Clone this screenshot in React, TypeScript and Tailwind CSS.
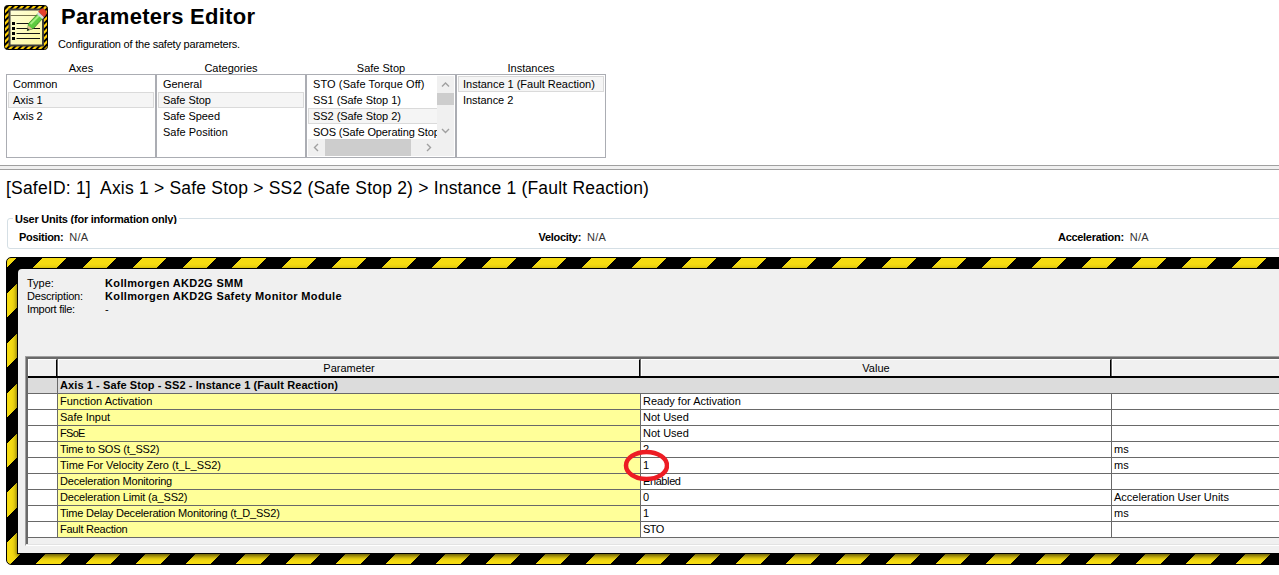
import React from "react";

type Row = { name: string; nameTrack?: string; value: string; valueTrack?: string; unit: string };

const rows: Row[] = [
  { name: "Function Activation", value: "Ready for Activation", unit: "" },
  { name: "Safe Input", value: "Not Used", unit: "" },
  { name: "FSoE", nameTrack: "tracking-[-0.7px]", value: "Not Used", unit: "" },
  { name: "Time to SOS (t_SS2)", nameTrack: "tracking-[-0.2px]", value: "2", unit: "ms" },
  { name: "Time For Velocity Zero (t_L_SS2)", nameTrack: "tracking-[-0.06px]", value: "1", unit: "ms" },
  { name: "Deceleration Monitoring", nameTrack: "tracking-[-0.18px]", value: "Enabled", valueTrack: "tracking-[-0.4px]", unit: "" },
  { name: "Deceleration Limit (a_SS2)", nameTrack: "tracking-[-0.16px]", value: "0", unit: "Acceleration User Units" },
  { name: "Time Delay Deceleration Monitoring (t_D_SS2)", nameTrack: "tracking-[-0.21px]", value: "1", unit: "ms" },
  { name: "Fault Reaction", nameTrack: "tracking-[-0.25px]", value: "STO", valueTrack: "tracking-[-0.5px]", unit: "" },
];

function EditorIcon() {
  return (
    <svg width="44" height="45" viewBox="0 0 44 45" className="block shrink-0">
      <defs>
        <pattern id="iconHazard" width="6" height="6" patternUnits="userSpaceOnUse">
          <rect width="6" height="6" fill="#000" />
          <path d="M0 0H3.2L0 3.2ZM6 0V3.2L3.2 6H0Z" fill="#ffd006" />
        </pattern>
        <linearGradient id="paper" x1="0" y1="0" x2="1" y2="1">
          <stop offset="0" stopColor="#ffffd8" />
          <stop offset="1" stopColor="#fbf7a0" />
        </linearGradient>
      </defs>
      <rect x="0.5" y="0.5" width="43" height="44" rx="3" fill="url(#iconHazard)" stroke="#000" strokeWidth="1" />
      <rect x="5.5" y="4.5" width="33.5" height="36" fill="url(#paper)" stroke="#3c3c3c" strokeWidth="2" />
      <path d="M6.5 10.5H38" stroke="#77744f" strokeWidth="1" />
      <path d="M8 17h3v3H8zM8 22h3v3H8zM8 27h3v3H8zM8 32h3v3H8z" fill="#000" />
      <path d="M12.5 18.5H34M12.5 23.5H36M12.5 28.5H36M12.5 33.5H36" stroke="#151515" strokeWidth="1.2" />
      <path d="M23.5 25.5L24.5 18.5L34.5 8L39.5 12.5L29.5 23.5Z" fill="#5ccb40" stroke="#2e7a24" strokeWidth="0.7" />
      <path d="M26.5 19L36 9.5" stroke="#a4ee80" strokeWidth="2" />
      <path d="M23.5 25.5L24.3 20.5L28.2 23.8Z" fill="#d9b98a" />
      <path d="M22.8 26L23.6 23.2L25.6 24.8Z" fill="#222" />
      <path d="M32.8 9L35 6.5L40.5 11.5L38.3 14Z" fill="#d8dde0" />
      <path d="M34.5 6.8L36.8 4.2Q39.5 3 41.6 5.5Q43.2 8 41.9 10L40 12Z" fill="#e4412d" stroke="#a52b20" strokeWidth="0.5" />
    </svg>
  );
}

function Item({ text, selected = false, track = "tracking-[-0.05px]" }: { text: string; selected?: boolean; track?: string }) {
  const frame = selected ? "border border-[#dadada] bg-[#f5f5f5] pl-1" : "pt-px pl-[5px]";
  return <div className={`h-4 overflow-hidden whitespace-nowrap leading-[15px] ${frame} ${track}`}>{text}</div>;
}

function ListColumn({ title, children }: { title: string; children: React.ReactNode }) {
  return (
    <div className="w-[150px]">
      <div className="h-3 text-center leading-[13px]">{title}</div>
      <div className="h-[84px] border border-[#abadb3] p-px">{children}</div>
    </div>
  );
}

function Chevron({ d }: { d: string }) {
  return (
    <svg width="9" height="9" viewBox="0 0 9 9" className="block">
      <path d={d} fill="none" stroke="#a0a0a0" strokeWidth="1.4" />
    </svg>
  );
}

function Unit({ label }: { label: string }) {
  return (
    <div className="flex w-[519.5px] shrink-0 gap-[6px] whitespace-nowrap">
      <b className="tracking-[-0.3px]">{label}</b>
      <span className="tracking-[0.2px] text-[#333]">N/A</span>
    </div>
  );
}

function HeadCell({ text, width }: { text: string; width: string }) {
  return (
    <div className={`${width} flex shrink-0 border-r border-[#696969]`}>
      <div className="flex grow items-center justify-center border-t border-r border-l border-t-white border-r-black border-l-white">
        {text}
      </div>
    </div>
  );
}

export default function App() {
  return (
    <div className="h-[575px] w-[1279px] overflow-hidden bg-white font-['Liberation_Sans',Arial,sans-serif] text-[11px] text-black">
      <header className="flex h-[62px] pt-[5px] pl-1">
        <EditorIcon />
        <div className="pl-[10px]">
          <h1 className="pl-[3px] text-[22px] font-bold leading-[24px] tracking-[0.28px]">Parameters Editor</h1>
          <p className="pt-[8px] leading-[14px] tracking-[-0.21px]">Configuration of the safety parameters.</p>
        </div>
      </header>

      <section className="flex h-[103px] pl-[6px]">
        <ListColumn title="Axes">
          <Item text="Common" />
          <Item text="Axis 1" selected />
          <Item text="Axis 2" />
        </ListColumn>
        <ListColumn title="Categories">
          <Item text="General" />
          <Item text="Safe Stop" selected />
          <Item text="Safe Speed" />
          <Item text="Safe Position" track="tracking-[0px]" />
        </ListColumn>
        <ListColumn title="Safe Stop">
          <div className="flex h-[63px]">
            <div className="h-full w-[129px] overflow-hidden">
              <Item text="STO (Safe Torque Off)" track="tracking-[0.1px]" />
              <Item text="SS1 (Safe Stop 1)" />
              <div className="-mr-[3px]">
                <Item text="SS2 (Safe Stop 2)" selected />
              </div>
              <Item text="SOS (Safe Operating Stop)" track="tracking-[-0.12px]" />
            </div>
            <div className="flex w-[17px] flex-col items-center bg-[#f0f0f0]">
              <div className="flex h-[17px] items-center"><Chevron d="M1 6.5L4.5 3L8 6.5" /></div>
              <div className="h-3 w-full bg-[#cdcdcd]" />
              <div className="grow" />
              <div className="flex h-[17px] items-center"><Chevron d="M1 3L4.5 6.5L8 3" /></div>
            </div>
          </div>
          <div className="flex h-[17px] items-center bg-[#f0f0f0]">
            <div className="flex w-[17px] justify-center"><Chevron d="M6 1L2.5 4.5L6 8" /></div>
            <div className="h-full w-[86px] bg-[#cdcdcd]" />
            <div className="grow" />
            <div className="mr-[17px] flex w-[17px] justify-center"><Chevron d="M3 1L6.5 4.5L3 8" /></div>
          </div>
        </ListColumn>
        <ListColumn title="Instances">
          <Item text="Instance 1 (Fault Reaction)" selected track="tracking-[-0.01px]" />
          <Item text="Instance 2" />
        </ListColumn>
      </section>

      <div className="h-[5px] border-y border-[#a0a0a0] bg-[#f0f0f0]" />

      <h2 className="h-[43px] whitespace-pre pt-[7px] pl-[6px] text-[17.5px] leading-[22px] tracking-[0.2px]">
        {"[SafeID: 1]  Axis 1 > Safe Stop > SS2 (Safe Stop 2) > Instance 1 (Fault Reaction)"}
      </h2>

      <fieldset className="ml-[7px] h-[36px] w-[1290px] rounded-[3px] border border-[#d5dfe5] pl-[11px]">
        <legend className="-ml-[6px] h-[11px] overflow-hidden px-[2px] font-bold leading-[13px] tracking-[-0.23px]">
          User Units (for information only)
        </legend>
        <div className="flex pt-[6px] leading-[14px]">
          <Unit label="Position:" />
          <Unit label="Velocity:" />
          <Unit label="Acceleration:" />
        </div>
      </fieldset>

      <main className="mt-[8px] ml-[6px] h-[308px] w-[1290px] rounded-[5px] border border-black bg-[repeating-linear-gradient(135deg,#f5db12_0px,#f5db12_7.07px,#000_7.07px,#000_24.75px,#f5db12_24.75px,#f5db12_35.355px)] p-[11px]">
        <div className="h-[284px] rounded-tl-[4px] bg-[#f0f0f0] pt-[7px] pl-[7px] shadow-[0_0_0_1px_#000,0_2px_5px_1px_#000000b0]">
          <dl className="grid h-[80px] grid-cols-[78px_1fr] content-start pt-px pl-[2px] leading-[13px]">
            <dt>Type:</dt>
            <dd className="font-bold tracking-[0.36px]">Kollmorgen AKD2G SMM</dd>
            <dt className="tracking-[-0.18px]">Description:</dt>
            <dd className="font-bold tracking-[0.36px]">Kollmorgen AKD2G Safety Monitor Module</dd>
            <dt className="tracking-[-0.3px]">Import file:</dt>
            <dd>-</dd>
          </dl>

          <div className="relative h-[190px] border-b border-l border-b-white border-l-[#a0a0a0]">
            <div className="h-[189px] border-t border-b border-t-[#a0a0a0] border-b-[#e3e3e3]">
              <div className="h-full border-t-2 border-l-2 border-[#696969]">
                <div className="flex h-[19px] border-b-2 border-black">
                  <HeadCell text="" width="w-[30px]" />
                  <HeadCell text="Parameter" width="w-[583px]" />
                  <HeadCell text="Value" width="w-[471px]" />
                  <HeadCell text="" width="w-[300px]" />
                </div>
                <div className="flex h-4 w-[1300px] border-b border-[#696969] bg-[#dcdcdc] font-bold leading-[15px]">
                  <div className="w-[30px] border-r border-[#696969]" />
                  <div className="pl-[2px] tracking-[0.09px]">Axis 1 - Safe Stop - SS2 - Instance 1 (Fault Reaction)</div>
                </div>
                {rows.map((r) => (
                  <div key={r.name} className="flex h-4 w-[1300px] border-b border-[#696969] bg-white leading-[15px]">
                    <div className="w-[30px] border-r border-[#696969]" />
                    <div className={`w-[583px] border-r border-[#696969] bg-[#ffff99] pl-[2px] ${r.nameTrack ?? ""}`}>{r.name}</div>
                    <div className={`w-[471px] border-r border-[#696969] pl-[2px] ${r.valueTrack ?? ""}`}>{r.value}</div>
                    <div className="pl-[2px]">{r.unit}</div>
                  </div>
                ))}
              </div>
            </div>
            <svg width="46" height="33" viewBox="0 0 46 33" className="absolute top-[92px] left-[597px]">
              <ellipse cx="23.5" cy="17.5" rx="20.5" ry="13.5" fill="none" stroke="#ed1c24" strokeWidth="4.5" />
            </svg>
          </div>
        </div>
      </main>
    </div>
  );
}
